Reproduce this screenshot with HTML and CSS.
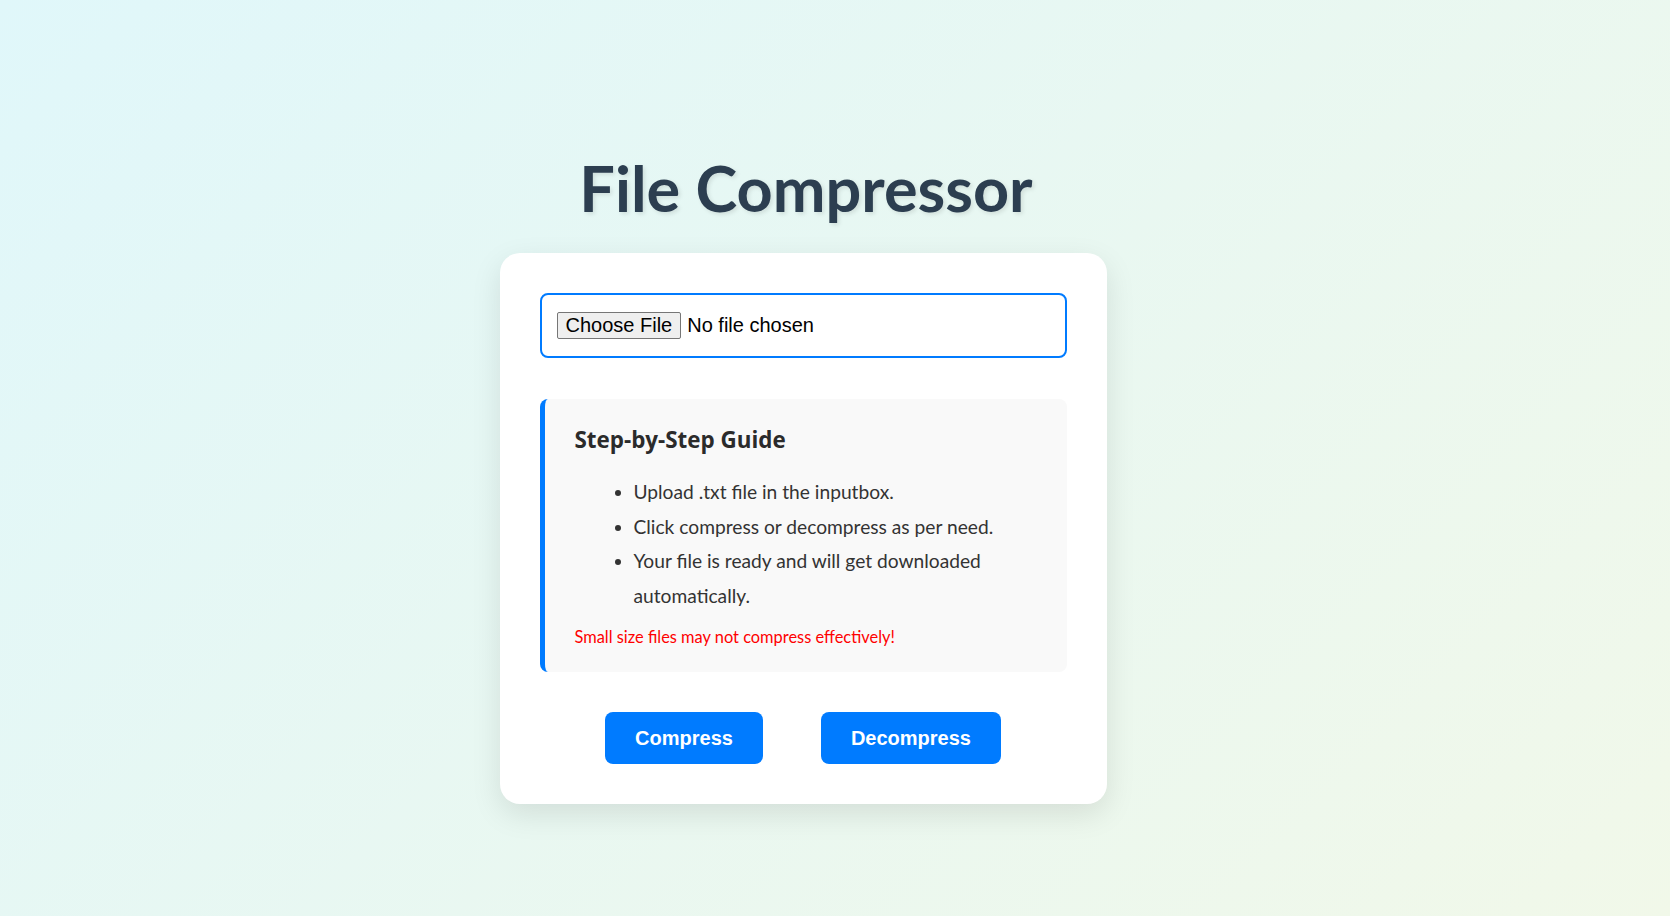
FILE: index.html
```html
<!DOCTYPE html>
<html lang="en">
<head>
<meta charset="UTF-8">
<title>File Compressor</title>
<link rel="stylesheet" href="styles.css">
</head>
<body>
  <main class="page">
    <h1 class="title">File Compressor</h1>
    <section class="card">
      <input type="file" class="file-input" accept=".txt">
      <div class="guide">
        <h3 class="guide-title">Step-by-Step Guide</h3>
        <ul class="guide-list">
          <li>Upload .txt file in the inputbox.</li>
          <li>Click compress or decompress as per need.</li>
          <li>Your file is ready and will get downloaded automatically.</li>
        </ul>
        <p class="warning">Small size files may not compress effectively!</p>
      </div>
      <div class="actions">
        <button class="btn">Compress</button>
        <button class="btn">Decompress</button>
      </div>
    </section>
  </main>
</body>
</html>
```
FILE: styles.css
```css
* { box-sizing: border-box; }

html, body { height: 100%; }

body {
  margin: 0;
  background: linear-gradient(135deg, #e0f7fa, #f1f8e9);
  font-family: Lato, "Open Sans", sans-serif;
  color: #333;
}

.page {
  display: flex;
  flex-direction: column;
  align-items: center;
  padding: 149px 64px 0 0;
}

.title {
  margin: 0 0 27px;
  padding-left: 6px;
  font-size: 63px;
  line-height: 77px;
  font-weight: 700;
  color: #2c3e50;
  text-shadow: 2px 2px 4px rgba(0, 0, 0, 0.1);
}

.card {
  width: 607px;
  background: #fff;
  border-radius: 20px;
  padding: 40px;
  box-shadow: 0 10px 30px rgba(0, 0, 0, 0.1);
}

.file-input {
  display: block;
  width: 100%;
  padding: 17px 15px;
  border: 2px solid #007bff;
  border-radius: 8px;
  background: #fff;
  font-family: "Liberation Sans", Arial, sans-serif;
  font-size: 20px;
  line-height: 27px;
  color: #000;
}

.file-input::file-selector-button {
  font-family: "Liberation Sans", Arial, sans-serif;
  font-size: 20px;
  line-height: 23px;
  padding: 1px 8px;
  margin-right: 6px;
  border: 1px solid #767676;
  border-radius: 2px;
  background: #efefef;
  color: #000;
}

.guide {
  margin-top: 41px;
  background: #f9f9f9;
  border-left: 5px solid #007bff;
  border-radius: 8px;
  padding: 26px 30px 24px;
}

.guide-title {
  margin: 0 0 20px;
  font-family: "Open Sans", Lato, sans-serif;
  font-size: 22.4px;
  line-height: 30px;
  font-weight: 700;
  color: #2b2b2b;
}

.guide-list {
  margin: 0;
  padding-left: 59px;
  font-size: 19.2px;
  line-height: 34.5px;
  color: #333;
}

.warning {
  margin: 13px 0 0;
  font-size: 16.4px;
  line-height: 22px;
  color: #ff0000;
}

.actions {
  display: flex;
  justify-content: center;
  gap: 58px;
  margin-top: 40px;
}

.btn {
  padding: 14.5px 30px;
  border: none;
  border-radius: 8px;
  background: #007bff;
  color: #fff;
  font-family: "Liberation Sans", Arial, sans-serif;
  font-size: 20px;
  line-height: 23px;
  font-weight: 700;
  cursor: pointer;
}
```
